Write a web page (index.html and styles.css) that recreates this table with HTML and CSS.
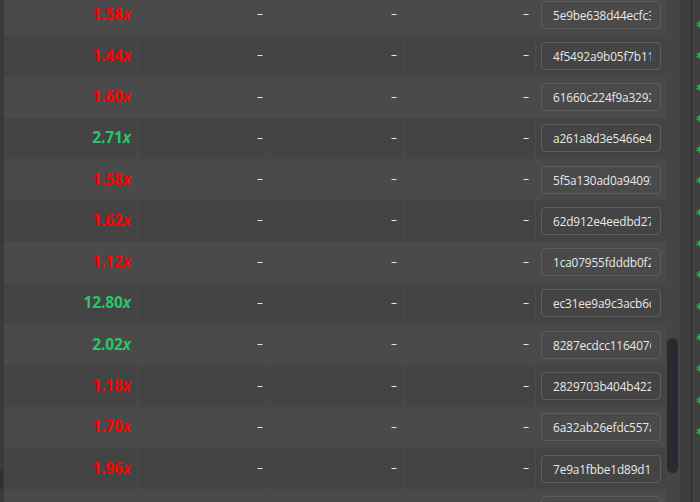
FILE: index.html
```html
<!DOCTYPE html>
<html>
<head>
<meta charset="utf-8">
<link rel="stylesheet" href="styles.css">
</head>
<body>
<div class="app">
  <div class="edge"><div class="edge-mark"></div></div>
  <div class="table">
    <div class="rows">
      <div class="row light"><div class="cell mult red">1.58<i>x</i></div><div class="cell dash">–</div><div class="cell dash">–</div><div class="cell dash">–</div><div class="cell hashcell"><div class="hash"><span>5e9be638d44ecfc3a7b1e09f2d6c84a5</span></div></div></div>
      <div class="row dark"><div class="cell mult red">1.44<i>x</i></div><div class="cell dash">–</div><div class="cell dash">–</div><div class="cell dash">–</div><div class="cell hashcell"><div class="hash"><span>4f5492a9b05f7b11c3e8d27a46f90b5e</span></div></div></div>
      <div class="row light"><div class="cell mult red">1.60<i>x</i></div><div class="cell dash">–</div><div class="cell dash">–</div><div class="cell dash">–</div><div class="cell hashcell"><div class="hash"><span>61660c224f9a3292be15a07d83c4f6e1</span></div></div></div>
      <div class="row dark"><div class="cell mult green">2.71<i>x</i></div><div class="cell dash">–</div><div class="cell dash">–</div><div class="cell dash">–</div><div class="cell hashcell"><div class="hash"><span>a261a8d3e5466e47d09b2c1f8a3e5b60</span></div></div></div>
      <div class="row light"><div class="cell mult red">1.58<i>x</i></div><div class="cell dash">–</div><div class="cell dash">–</div><div class="cell dash">–</div><div class="cell hashcell"><div class="hash"><span>5f5a130ad0a940938e2b7c61f4d05a9c</span></div></div></div>
      <div class="row dark"><div class="cell mult red">1.62<i>x</i></div><div class="cell dash">–</div><div class="cell dash">–</div><div class="cell dash">–</div><div class="cell hashcell"><div class="hash"><span>62d912e4eedbd275a1c09f3e86b47d20</span></div></div></div>
      <div class="row light"><div class="cell mult red">1.12<i>x</i></div><div class="cell dash">–</div><div class="cell dash">–</div><div class="cell dash">–</div><div class="cell hashcell"><div class="hash"><span>1ca07955fdddb0f2e49c3a81b6d7502f</span></div></div></div>
      <div class="row dark"><div class="cell mult green">12.80<i>x</i></div><div class="cell dash">–</div><div class="cell dash">–</div><div class="cell dash">–</div><div class="cell hashcell"><div class="hash"><span>ec31ee9a9c3acb6c0f75d2e84b19a36d</span></div></div></div>
      <div class="row light"><div class="cell mult green">2.02<i>x</i></div><div class="cell dash">–</div><div class="cell dash">–</div><div class="cell dash">–</div><div class="cell hashcell"><div class="hash"><span>8287ecdcc1164076b3a9e05d21f84c7e</span></div></div></div>
      <div class="row dark"><div class="cell mult red">1.18<i>x</i></div><div class="cell dash">–</div><div class="cell dash">–</div><div class="cell dash">–</div><div class="cell hashcell"><div class="hash"><span>2829703b404b4229f6e1a8c57d30b9e4</span></div></div></div>
      <div class="row light"><div class="cell mult red">1.70<i>x</i></div><div class="cell dash">–</div><div class="cell dash">–</div><div class="cell dash">–</div><div class="cell hashcell"><div class="hash"><span>6a32ab26efdc557a9d04c81e3b6f2a75</span></div></div></div>
      <div class="row dark"><div class="cell mult red">1.96<i>x</i></div><div class="cell dash">–</div><div class="cell dash">–</div><div class="cell dash">–</div><div class="cell hashcell"><div class="hash"><span>7e9a1fbbe1d89d19c2f04a6b853e7d01</span></div></div></div>
      <div class="row light"><div class="cell mult red">1.34<i>x</i></div><div class="cell dash">–</div><div class="cell dash">–</div><div class="cell dash">–</div><div class="cell hashcell"><div class="hash"><span>3b8e0d71c5a29f64e0b7d3a18c4f6e92</span></div></div></div>
    </div>
  </div>
  <div class="scrolltrack"><div class="thumb"></div></div>
  <div class="gutter"></div>
  <div class="sideline"></div>
  <div class="side">
    <div class="stars">
      <span>*</span><span>*</span><span>*</span><span>*</span><span>*</span><span>*</span><span>*</span><span>*</span><span>*</span><span>*</span><span>*</span><span>*</span><span>*</span><span>*</span>
    </div>
  </div>
</div>
</body>
</html>
```

FILE: styles.css
```css
html, body {
  margin: 0;
  padding: 0;
  width: 700px;
  height: 502px;
  overflow: hidden;
  background: #474747;
}

.app {
  display: flex;
  width: 700px;
  height: 502px;
  overflow: hidden;
  font-family: "Open Sans", "Liberation Sans", sans-serif;
}

.edge {
  width: 4px;
  flex: none;
  background: #3a3a3a;
  display: flex;
  flex-direction: column;
  padding-top: 470px;
  box-sizing: border-box;
}

.edge-mark {
  width: 3px;
  height: 19px;
  background: #2c3037;
}

.table {
  width: 662px;
  flex: none;
  overflow: hidden;
}

.rows {
  margin-top: -6px;
  display: flex;
  flex-direction: column;
}

.row {
  display: grid;
  grid-template-columns: 133px 132px 134px 132px 131px;
  height: 41.27px;
  flex: none;
  align-items: center;
}

.row.light { background: #4a4a4a; }
.row.dark { background: #444444; }

.cell {
  height: 100%;
  display: flex;
  align-items: center;
  justify-content: flex-end;
  box-sizing: border-box;
  padding-bottom: 2px;
}

.row .cell + .cell { border-left: 1px solid transparent; }
.row.dark .cell + .cell { border-left-color: #4b4b4b; }

.mult {
  padding-right: 6px;
  font-size: 15.5px;
  font-weight: 700;
  letter-spacing: -0.1px;
}
.mult i { font-style: italic; }
.red { color: #ff0000; }
.green { color: #2cc46a; }

.dash {
  padding-right: 6px;
  font-size: 12px;
  color: #e4e4e4;
}

.hashcell {
  justify-content: flex-start;
  padding-left: 5px;
  padding-bottom: 0;
}

.hash {
  width: 120px;
  height: 28px;
  box-sizing: border-box;
  border: 1px solid #5e5e5e;
  border-radius: 4px;
  padding: 0 9px 0 11px;
  font-size: 11.8px;
  letter-spacing: -0.12px;
  line-height: 26px;
  color: #e8e8e8;
}

.hash span {
  display: block;
  white-space: nowrap;
  overflow: hidden;
}

.scrolltrack {
  width: 14px;
  flex: none;
  background: #454545;
  padding: 338px 2px 0 1px;
  box-sizing: border-box;
}

.thumb {
  width: 11px;
  height: 135px;
  border-radius: 6px;
  background: #272a30;
}

.gutter {
  width: 11px;
  flex: none;
  background: #3d3d3d;
}

.sideline {
  width: 1px;
  flex: none;
  background: #2b2b2b;
}

.side {
  width: 8px;
  flex: none;
  background: #404040;
  overflow: hidden;
}

.stars {
  display: flex;
  flex-direction: column;
  padding-top: 11px;
  padding-left: 4px;
}

.stars span {
  height: 31.3px;
  line-height: 31.3px;
  font-size: 14px;
  font-weight: 700;
  color: #2bb55e;
  font-family: "DejaVu Sans", sans-serif;
}
```
